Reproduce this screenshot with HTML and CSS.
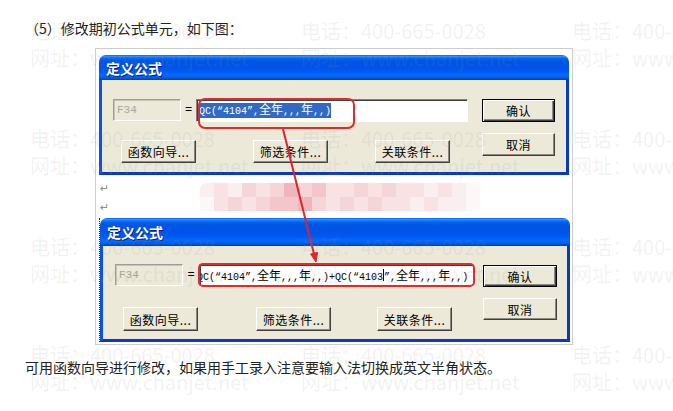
FILE: index.html
```html
<!DOCTYPE html>
<html lang="zh-CN">

<head>
    <meta charset="UTF-8" />
    <title>修改期初公式单元</title>
    <link rel="stylesheet" href="styles.css">
</head>

<body>
    <div class="page">
        <p class="step">（5）修改期初公式单元，如下图：</p>

        <div class="shot">

            <!-- 修改前 -->
            <div class="dlg dlg-a">
                <div class="dlg-title">定义公式</div>
                <div class="dlg-body">
                    <div class="dlg-main">
                        <div class="row">
                            <div class="cell">F34</div>
                            <span class="eq">=</span>
                            <div class="formula">
                                <span class="sel">QC(“4104”,<span class="zh">全年</span>,,,<span class="zh">年</span>,,)</span>
                                <div class="mark"></div>
                            </div>
                        </div>
                        <div class="btns">
                            <button class="btn">函数向导...</button>
                            <button class="btn">筛选条件...</button>
                            <button class="btn">关联条件...</button>
                        </div>
                    </div>
                    <div class="dlg-side">
                        <button class="btn btn-def">确认</button>
                        <button class="btn">取消</button>
                    </div>
                </div>
            </div>

            <!-- 文档段落 -->
            <div class="doc">
                <div class="rets">
                    <span class="ret">↵</span>
                    <span class="ret">↵</span>
                </div>
                <div class="mosaic">
                    <i class="s1"></i><i class="s2"></i><i class="s1"></i><i class="s3"></i><i class="s2"></i>
                    <i class="s3"></i><i class="s5"></i><i class="s3"></i><i class="s4"></i><i class="s2"></i>
                    <i class="s2"></i><i class="s3"></i><i class="s2"></i><i class="s3"></i><i class="s2"></i>
                    <i class="s2"></i><i class="s1"></i><i class="s2"></i><i class="s1"></i><i class="s0"></i>
                    <i class="s0"></i><i class="s2"></i><i class="s3"></i><i class="s2"></i><i class="s3"></i>
                    <i class="s4"></i><i class="s4"></i><i class="s5"></i><i class="s3"></i><i class="s2"></i>
                    <i class="s3"></i><i class="s2"></i><i class="s3"></i><i class="s2"></i><i class="s2"></i>
                    <i class="s1"></i><i class="s2"></i><i class="s1"></i><i class="s1"></i><i class="s0"></i>
                </div>
            </div>

            <!-- 修改后 -->
            <div class="dlg-wrap">
                <div class="dlg dlg-b">
                    <div class="dlg-title">定义公式</div>
                    <div class="dlg-body">
                        <div class="dlg-main">
                            <div class="row">
                                <div class="cell">F34</div>
                                <span class="eq">=</span>
                                <div class="formula">
                                    <span class="txt">QC(“4104”,<span class="zh">全年</span>,,,<span class="zh">年</span>,,)+QC(“4103<b class="caret"></b>”,<span class="zh">全年</span>,,,<span class="zh">年</span>,,)</span>
                                    <div class="mark"></div>
                                </div>
                            </div>
                            <div class="btns">
                                <button class="btn">函数向导...</button>
                                <button class="btn">筛选条件...</button>
                                <button class="btn">关联条件...</button>
                            </div>
                        </div>
                        <div class="dlg-side">
                            <button class="btn btn-def">确认</button>
                            <button class="btn">取消</button>
                        </div>
                    </div>
                </div>
            </div>
        </div>

        <p class="note">可用函数向导进行修改，如果用手工录入注意要输入法切换成英文半角状态。</p>

        <svg class="arrow" width="673" height="411" viewBox="0 0 673 411">
            <line x1="283" y1="129" x2="314" y2="254" stroke="#d9252b" stroke-width="2" />
            <polygon points="316,262 317.6,252.4 310.6,254.1" fill="#d9252b" stroke="#d9252b" stroke-width="1" />
        </svg>

        <div class="wm">
            <div class="wm-tile"><span>电话：400-665-0028</span><span>网址：www.chanjet.net</span></div>
            <div class="wm-tile"><span>电话：400-665-0028</span><span>网址：www.chanjet.net</span></div>
            <div class="wm-tile"><span>电话：400-665-0028</span><span>网址：www.chanjet.net</span></div>
            <div class="wm-tile"><span>电话：400-665-0028</span><span>网址：www.chanjet.net</span></div>
            <div class="wm-tile"><span>电话：400-665-0028</span><span>网址：www.chanjet.net</span></div>
            <div class="wm-tile"><span>电话：400-665-0028</span><span>网址：www.chanjet.net</span></div>
            <div class="wm-tile"><span>电话：400-665-0028</span><span>网址：www.chanjet.net</span></div>
            <div class="wm-tile"><span>电话：400-665-0028</span><span>网址：www.chanjet.net</span></div>
            <div class="wm-tile"><span>电话：400-665-0028</span><span>网址：www.chanjet.net</span></div>
            <div class="wm-tile"><span>电话：400-665-0028</span><span>网址：www.chanjet.net</span></div>
            <div class="wm-tile"><span>电话：400-665-0028</span><span>网址：www.chanjet.net</span></div>
            <div class="wm-tile"><span>电话：400-665-0028</span><span>网址：www.chanjet.net</span></div>
        </div>
    </div>
</body>

</html>
```

FILE: styles.css
```css
body {
    margin: 0;
    background-color: #fff;
    font-family: "Noto Sans CJK SC", sans-serif;
}

.page {
    position: relative;
    width: 673px;
    height: 411px;
    overflow: hidden;
    box-sizing: border-box;
    padding: 18px 0 0 25px;
}

.step,
.note {
    margin: 0;
    font-size: 14px;
    line-height: 20px;
    color: #222;
}

.note {
    margin-top: 12px;
}

/* 截图外框 */
.shot {
    width: 478px;
    box-sizing: border-box;
    margin: 10px 0 0 70px;
    padding: 6px 2px 2px 3px;
    border: 1px solid #cdcdcd;
}

/* XP 对话框 */
.dlg {
    width: 470px;
}

.dlg-title {
    height: 25px;
    display: flex;
    align-items: center;
    padding-left: 7px;
    border-radius: 7px 7px 0 0;
    background: linear-gradient(to bottom, #0058ee 0%, #3593ff 5%, #127dff 9%, #036ffc 12%, #0262ee 16%, #0057e5 22%, #0054e3 28%, #0055eb 56%, #005bf5 68%, #026afe 78%, #0062ef 88%, #0052d6 94%, #0040ab 100%);
    color: #fff;
    font-size: 14px;
    font-weight: bold;
    text-shadow: 1px 1px #0a1e80;
}

.dlg-body {
    display: flex;
    gap: 14px;
    padding: 19px 11px 9px;
    background-color: #ece9d8;
    border: 3px solid #0a51e4;
    border-top: 0;
    border-right-color: #0838c8;
    border-bottom-color: #0838c8;
}

.dlg-main {
    width: 355px;
}

.row {
    display: flex;
    height: 23px;
}

.cell {
    width: 68px;
    height: 22px;
    box-sizing: border-box;
    padding: 3px 0 0 3px;
    background-color: #ece9d8;
    border: 1px solid;
    border-color: #9d9d98 #fff #fff #9d9d98;
    box-shadow: inset 1px 1px #c8c5b6;
    font: 11px/14px "Liberation Mono", monospace;
    color: #a6a6a0;
}

.eq {
    width: 15px;
    text-align: center;
    font: 12px/22px "Liberation Mono", monospace;
}

.formula {
    position: relative;
    width: 272px;
    box-sizing: border-box;
    padding: 3px 0 0 2px;
    background-color: #fff;
    border: 1px solid;
    border-color: #808080 #fff #fff #808080;
    box-shadow: inset 1px 1px #404040;
    font: 10px/12px "Liberation Mono", "Noto Sans CJK SC", monospace;
    white-space: nowrap;
}

.zh {
    font-family: "Noto Sans CJK SC", sans-serif;
    font-size: 12px;
}

.sel {
    display: inline-block;
    background-color: #316ac5;
    color: #fff;
}

.mark {
    position: absolute;
    left: 1px;
    top: -2px;
    width: 157px;
    height: 31px;
    box-sizing: border-box;
    border: 2px solid #e02b2b;
    border-radius: 7px;
}

.btns {
    display: flex;
    margin-top: 18px;
}

.btn {
    width: 75px;
    height: 23px;
    padding: 0;
    margin: 0;
    background-color: #ece9d8;
    border: 1px solid;
    border-color: #fff #404040 #404040 #fff;
    box-shadow: inset -1px -1px #8c8a80;
    font: 12px "Noto Sans CJK SC", sans-serif;
    color: #000;
    letter-spacing: 0.5px;
}

.btns .btn:first-child {
    margin-left: 8px;
}

.btns .btn:nth-child(2) {
    margin-left: 57px;
}

.btns .btn:nth-child(3) {
    margin-left: 47px;
}

.dlg-side {
    display: flex;
    flex-direction: column;
    gap: 11px;
}

.dlg-side .btn {
    width: 73px;
}

.btn-def {
    border-color: #000;
    box-shadow: inset 1px 1px #fff, inset -1px -1px #404040, inset -2px -2px #8c8a80;
}

/* 第二个对话框 */
.dlg-wrap {
    border-left: 1px dotted #1b2a78;
}

.dlg-b .dlg-title {
    height: 28px;
}

.dlg-b .dlg-body {
    gap: 9px;
    padding: 18px 10px 8px 12px;
}

.dlg-b .dlg-main {
    width: 359px;
}

.dlg-b .row {
    height: 22px;
}

.dlg-b .eq {
    width: 16px;
}

.dlg-b .formula {
    width: 275px;
    height: 22px;
    padding: 4px 0 0 0;
}

.dlg-b .txt {
    display: block;
    margin-left: -3px;
    clip-path: inset(0 0 0 4px);
}

.caret {
    display: inline-block;
    width: 1px;
    height: 12px;
    vertical-align: top;
    background-color: #000;
}

.dlg-b .mark {
    left: -2px;
    top: -2px;
    width: 277px;
    height: 24px;
    border-radius: 5px;
}

.dlg-b .btns {
    margin-top: 21px;
}

.dlg-b .btn {
    height: 24px;
}

.dlg-b .btns .btn:nth-child(2) {
    margin-left: 58px;
}

.dlg-b .btns .btn:nth-child(3) {
    margin-left: 46px;
}

.dlg-b .dlg-side {
    padding-top: 1px;
}

.dlg-b .dlg-side .btn {
    width: 74px;
    height: 22px;
}

/* 文档段落与马赛克 */
.doc {
    display: flex;
    height: 43px;
}

.rets {
    width: 100px;
    padding: 4px 0 0 1px;
    display: flex;
    flex-direction: column;
}

.ret {
    font: 11px/19px "DejaVu Sans", sans-serif;
    color: #8c8c8c;
}

.mosaic {
    display: grid;
    grid-template-columns: repeat(20, 14px);
    grid-auto-rows: 14px;
    margin-top: 8px;
    height: 28px;
}

.mosaic i:first-child {
    border-top-left-radius: 6px;
}

.s0 {
    background-color: #fdf7f7;
}

.s1 {
    background-color: #fbeef0;
}

.s2 {
    background-color: #f8e2e4;
}

.s3 {
    background-color: #f5d5d8;
}

.s4 {
    background-color: #f2c6ca;
}

.s5 {
    background-color: #efb5ba;
}

/* 红色箭头 */
.arrow {
    position: absolute;
    left: 0;
    top: 0;
    pointer-events: none;
}

/* 水印 */
.wm {
    position: absolute;
    left: 0;
    top: 0;
    width: 900px;
    display: grid;
    grid-template-columns: repeat(3, 271px);
    grid-auto-rows: 108px;
    padding: 17px 0 0 30px;
    pointer-events: none;
}

.wm-tile {
    display: flex;
    flex-direction: column;
    font-size: 20px;
    line-height: 27px;
    white-space: nowrap;
    color: rgba(150, 150, 150, 0.13);
}
```
